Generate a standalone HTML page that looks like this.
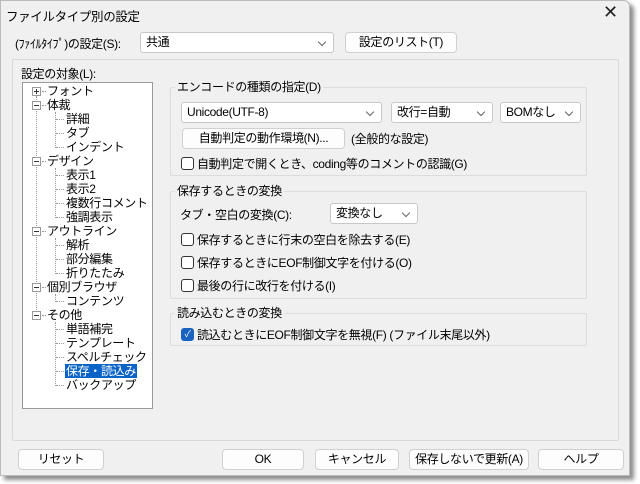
<!DOCTYPE html>
<html><head><meta charset="utf-8"><style>
*{box-sizing:border-box;margin:0;padding:0}
body{width:640px;height:484px;background:#fff;position:relative;overflow:hidden;font-family:"Liberation Sans","Noto Sans CJK JP",sans-serif;font-size:12px;color:#000;letter-spacing:-0.35px}
.a{position:absolute;white-space:nowrap}
#win{position:absolute;left:0;top:0;width:630px;height:476px;background:#f0f0f0;border:1px solid #bbb;box-shadow:4px 4px 4px rgba(0,0,0,.45);border-radius:0 6px 0 0}
.cb{position:absolute;background:#fff;border:1px solid #c8c8c8;border-radius:3px;height:21px;padding:2px 5px;line-height:15px}
.cb:after{content:"";position:absolute;right:8px;top:6px;width:5px;height:5px;border-right:1px solid #666;border-bottom:1px solid #666;transform:rotate(45deg)}
.btn{position:absolute;background:#fdfdfd;border:1px solid #d0d0d0;border-radius:4px;height:21px;text-align:center;line-height:19px}
.grp{position:absolute;border:1px solid #dcdcdc;border-radius:2px}
.gl{position:absolute;background:#f0f0f0;padding:0 2px;line-height:14px}
.ck{position:absolute;width:13px;height:13px;border:1px solid #333;border-radius:3px;background:#fff}
.tr{position:absolute;line-height:14px}
.hl{position:absolute;border-top:1px dotted #999;width:8px}
.vl{position:absolute;border-left:1px dotted #999}
.pm{position:absolute;width:9px;height:9px;border:1px solid #999;background:#fff}
.pm:before{content:"";position:absolute;left:1px;top:3px;width:5px;border-top:1px solid #333}
</style></head><body>
<div id="win"></div>
<div class="a" style="left:6px;top:6px;font-size:12.5px">ファイルタイプ別の設定</div>
<div class="a" style="left:603px;top:2px;font-size:18px;color:#222">✕</div>
<div class="a" style="left:15px;top:35px">(ﾌｧｲﾙﾀｲﾌﾟ)の設定(S):</div>
<div class="cb" style="left:140px;top:32px;width:194px">共通</div>
<div class="btn" style="left:345px;top:32px;width:112px">設定のリスト(T)</div>
<div class="grp" style="left:12px;top:59px;width:607px;height:382px;border-color:#d8d8d8"></div>
<div class="a" style="left:21px;top:65px">設定の対象(L):</div>
<div class="a" style="left:22px;top:82px;width:131px;height:327px;background:#fff;border:1px solid #999"></div>
<div class="vl" style="left:36px;top:96px;height:220px"></div>
<div class="vl" style="left:55px;top:112px;height:36px"></div>
<div class="vl" style="left:55px;top:168px;height:50px"></div>
<div class="vl" style="left:55px;top:238px;height:36px"></div>
<div class="vl" style="left:55px;top:294px;height:8px"></div>
<div class="vl" style="left:55px;top:322px;height:64px"></div>
<div class="pm" style="left:32px;top:87px"><span style="position:absolute;left:3px;top:1px;height:5px;border-left:1px solid #333"></span></div>
<div class="hl" style="left:42px;top:91px;width:4px"></div><div class="tr" style="left:47px;top:84px">フォント</div>
<div class="pm" style="left:32px;top:101px"></div><div class="hl" style="left:42px;top:105px;width:4px"></div><div class="tr" style="left:47px;top:98px">体裁</div>
<div class="hl" style="left:56px;top:119px"></div><div class="tr" style="left:66px;top:112px">詳細</div>
<div class="hl" style="left:56px;top:133px"></div><div class="tr" style="left:66px;top:126px">タブ</div>
<div class="hl" style="left:56px;top:147px"></div><div class="tr" style="left:66px;top:140px">インデント</div>
<div class="pm" style="left:32px;top:157px"></div><div class="hl" style="left:42px;top:161px;width:4px"></div><div class="tr" style="left:47px;top:154px">デザイン</div>
<div class="hl" style="left:56px;top:175px"></div><div class="tr" style="left:66px;top:168px">表示1</div>
<div class="hl" style="left:56px;top:189px"></div><div class="tr" style="left:66px;top:182px">表示2</div>
<div class="hl" style="left:56px;top:203px"></div><div class="tr" style="left:66px;top:196px">複数行コメント</div>
<div class="hl" style="left:56px;top:217px"></div><div class="tr" style="left:66px;top:210px">強調表示</div>
<div class="pm" style="left:32px;top:227px"></div><div class="hl" style="left:42px;top:231px;width:4px"></div><div class="tr" style="left:47px;top:224px">アウトライン</div>
<div class="hl" style="left:56px;top:245px"></div><div class="tr" style="left:66px;top:238px">解析</div>
<div class="hl" style="left:56px;top:259px"></div><div class="tr" style="left:66px;top:252px">部分編集</div>
<div class="hl" style="left:56px;top:273px"></div><div class="tr" style="left:66px;top:266px">折りたたみ</div>
<div class="pm" style="left:32px;top:283px"></div><div class="hl" style="left:42px;top:287px;width:4px"></div><div class="tr" style="left:47px;top:280px">個別ブラウザ</div>
<div class="hl" style="left:56px;top:301px"></div><div class="tr" style="left:66px;top:294px">コンテンツ</div>
<div class="pm" style="left:32px;top:311px"></div><div class="hl" style="left:42px;top:315px;width:4px"></div><div class="tr" style="left:47px;top:308px">その他</div>
<div class="hl" style="left:56px;top:329px"></div><div class="tr" style="left:66px;top:322px">単語補完</div>
<div class="hl" style="left:56px;top:343px"></div><div class="tr" style="left:66px;top:336px">テンプレート</div>
<div class="hl" style="left:56px;top:357px"></div><div class="tr" style="left:66px;top:350px">スペルチェック</div>
<div class="hl" style="left:56px;top:371px"></div><div class="tr" style="left:65px;top:364px;background:#0a64c8;color:#fff;padding:0 1px">保存・読込み</div>
<div class="hl" style="left:56px;top:385px"></div><div class="tr" style="left:66px;top:378px">バックアップ</div>

<div class="grp" style="left:170px;top:87px;width:417px;height:89px"></div>
<div class="gl" style="left:175px;top:80px">エンコードの種類の指定(D)</div>
<div class="cb" style="left:181px;top:102px;width:201px">Unicode(UTF-8)</div>
<div class="cb" style="left:391px;top:102px;width:102px">改行=自動</div>
<div class="cb" style="left:500px;top:102px;width:81px">BOMなし</div>
<div class="btn" style="left:182px;top:128px;width:163px">自動判定の動作環境(N)...</div>
<div class="a" style="left:351px;top:130px">(全般的な設定)</div>
<div class="ck" style="left:181px;top:157px"></div><div class="a" style="left:197px;top:155px">自動判定で開くとき、coding等のコメントの認識(G)</div>

<div class="grp" style="left:170px;top:191px;width:417px;height:108px"></div>
<div class="gl" style="left:175px;top:184px">保存するときの変換</div>
<div class="a" style="left:180px;top:206px">タブ・空白の変換(C):</div>
<div class="cb" style="left:330px;top:203px;width:88px">変換なし</div>
<div class="ck" style="left:181px;top:233px"></div><div class="a" style="left:197px;top:231px">保存するときに行末の空白を除去する(E)</div>
<div class="ck" style="left:181px;top:256px"></div><div class="a" style="left:197px;top:254px">保存するときにEOF制御文字を付ける(O)</div>
<div class="ck" style="left:181px;top:279px"></div><div class="a" style="left:197px;top:277px">最後の行に改行を付ける(I)</div>

<div class="grp" style="left:170px;top:313px;width:417px;height:33px"></div>
<div class="gl" style="left:175px;top:306px">読み込むときの変換</div>
<div class="ck" style="left:181px;top:328px;background:#1a62c0;border-color:#1a62c0;color:#fff;font-size:9px;line-height:11px;text-align:center">✓</div><div class="a" style="left:197px;top:326px">読込むときにEOF制御文字を無視(F) (ファイル末尾以外)</div>

<div class="btn" style="left:18px;top:449px;width:86px">リセット</div>
<div class="btn" style="left:222px;top:449px;width:82px">OK</div>
<div class="btn" style="left:315px;top:449px;width:84px">キャンセル</div>
<div class="btn" style="left:409px;top:449px;width:120px">保存しないで更新(A)</div>
<div class="btn" style="left:538px;top:449px;width:86px">ヘルプ</div>
</body></html>
